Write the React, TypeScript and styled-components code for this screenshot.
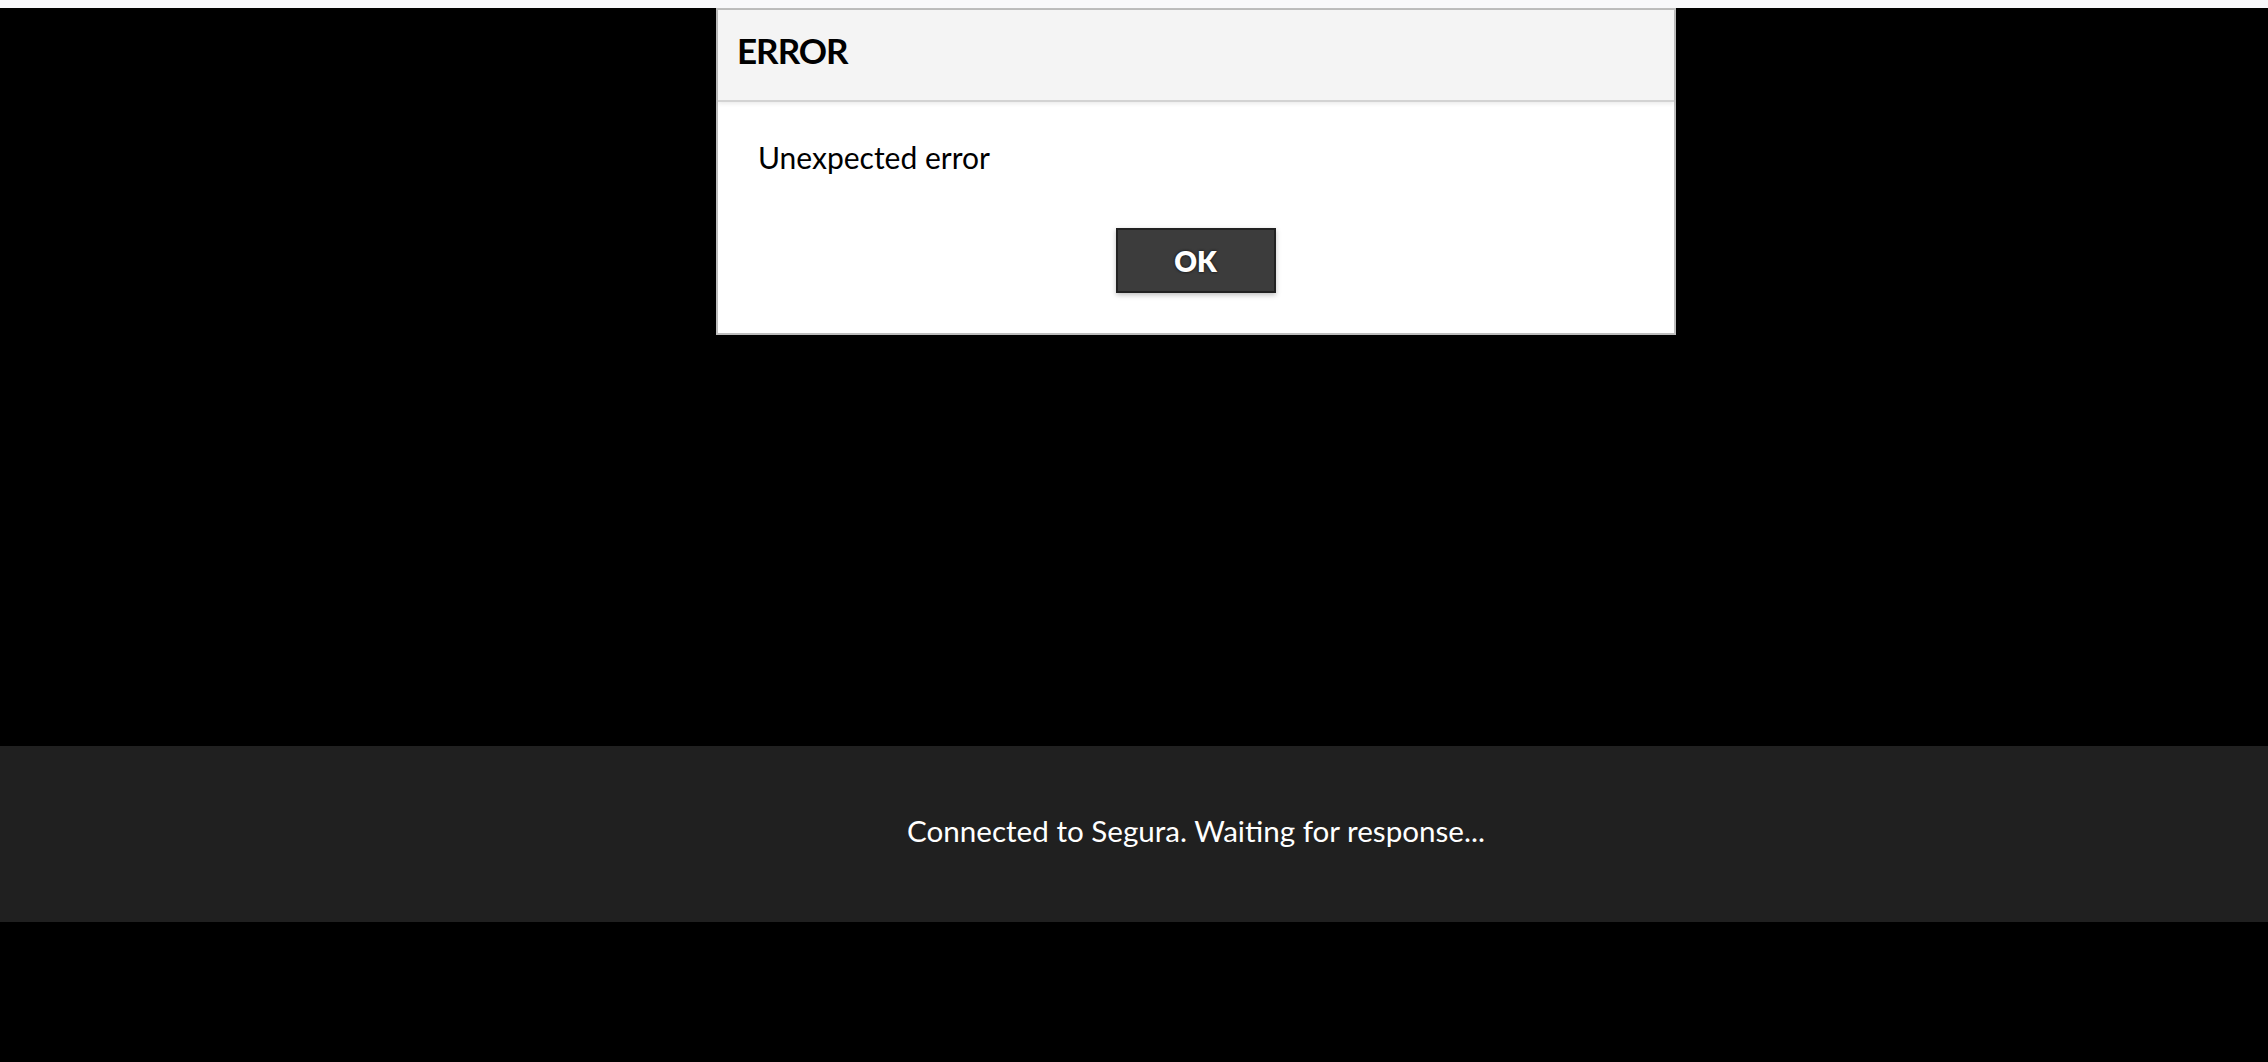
import styled, { createGlobalStyle } from 'styled-components';

const GlobalStyle = createGlobalStyle`
  html, body {
    margin: 0;
    padding: 0;
    background: #000;
  }
  body {
    font-family: Lato, 'Open Sans', sans-serif;
  }
`;

const Page = styled.div`
  min-height: 1062px;
  display: flex;
  flex-direction: column;
  background: #000;
`;

const TopStrip = styled.div`
  height: 8px;
  background: #f8f8fa;
`;

const Stage = styled.div`
  display: flex;
  flex-direction: column;
  align-items: center;
  height: 738px;
  padding-left: 124px;
`;

const Dialog = styled.div`
  width: 956px;
  border: 2px solid #bdbdbd;
  background: #fff;
  display: flex;
  flex-direction: column;
`;

const DialogHeader = styled.div`
  height: 92px;
  box-sizing: border-box;
  display: flex;
  align-items: center;
  padding: 0 20px 10px 19px;
  background: #f4f4f4;
  border-bottom: 2px solid #d3d3d3;
  box-shadow: 0 2px 4px rgba(0, 0, 0, 0.08);
`;

const Title = styled.h1`
  margin: 0;
  font-size: 35px;
  font-weight: 700;
  letter-spacing: -1px;
  color: #000;
  line-height: 1.2;
`;

const DialogBody = styled.div`
  display: flex;
  flex-direction: column;
  padding: 37px 41px 40px 40px;
`;

const Message = styled.p`
  margin: 0;
  font-size: 30px;
  line-height: 36px;
  color: #000;
`;

const Actions = styled.div`
  display: flex;
  justify-content: center;
  margin-top: 53px;
`;

const OkButton = styled.button`
  width: 160px;
  height: 65px;
  background: #3c3c3c;
  border: 2px solid #222;
  box-shadow: 0 2px 5px rgba(0, 0, 0, 0.25);
  color: #fff;
  font-family: Lato, 'Open Sans', sans-serif;
  font-size: 28px;
  font-weight: 800;
  text-shadow: 0 0 3px rgba(0, 0, 0, 0.9);
  cursor: pointer;
`;

const StatusBar = styled.div`
  height: 176px;
  box-sizing: border-box;
  background: #202020;
  display: flex;
  align-items: center;
  justify-content: center;
  padding: 0 0 7px 124px;
`;

const StatusText = styled.span`
  color: #fff;
  font-size: 29.6px;
  line-height: 36px;
`;

const App = () => {
  return (
    <>
      <GlobalStyle />
      <Page>
        <TopStrip />
        <Stage>
          <Dialog>
            <DialogHeader>
              <Title>ERROR</Title>
            </DialogHeader>
            <DialogBody>
              <Message>Unexpected error</Message>
              <Actions>
                <OkButton>OK</OkButton>
              </Actions>
            </DialogBody>
          </Dialog>
        </Stage>
        <StatusBar>
          <StatusText>Connected to Segura. Waiting for response...</StatusText>
        </StatusBar>
      </Page>
    </>
  );
};

export default App;
